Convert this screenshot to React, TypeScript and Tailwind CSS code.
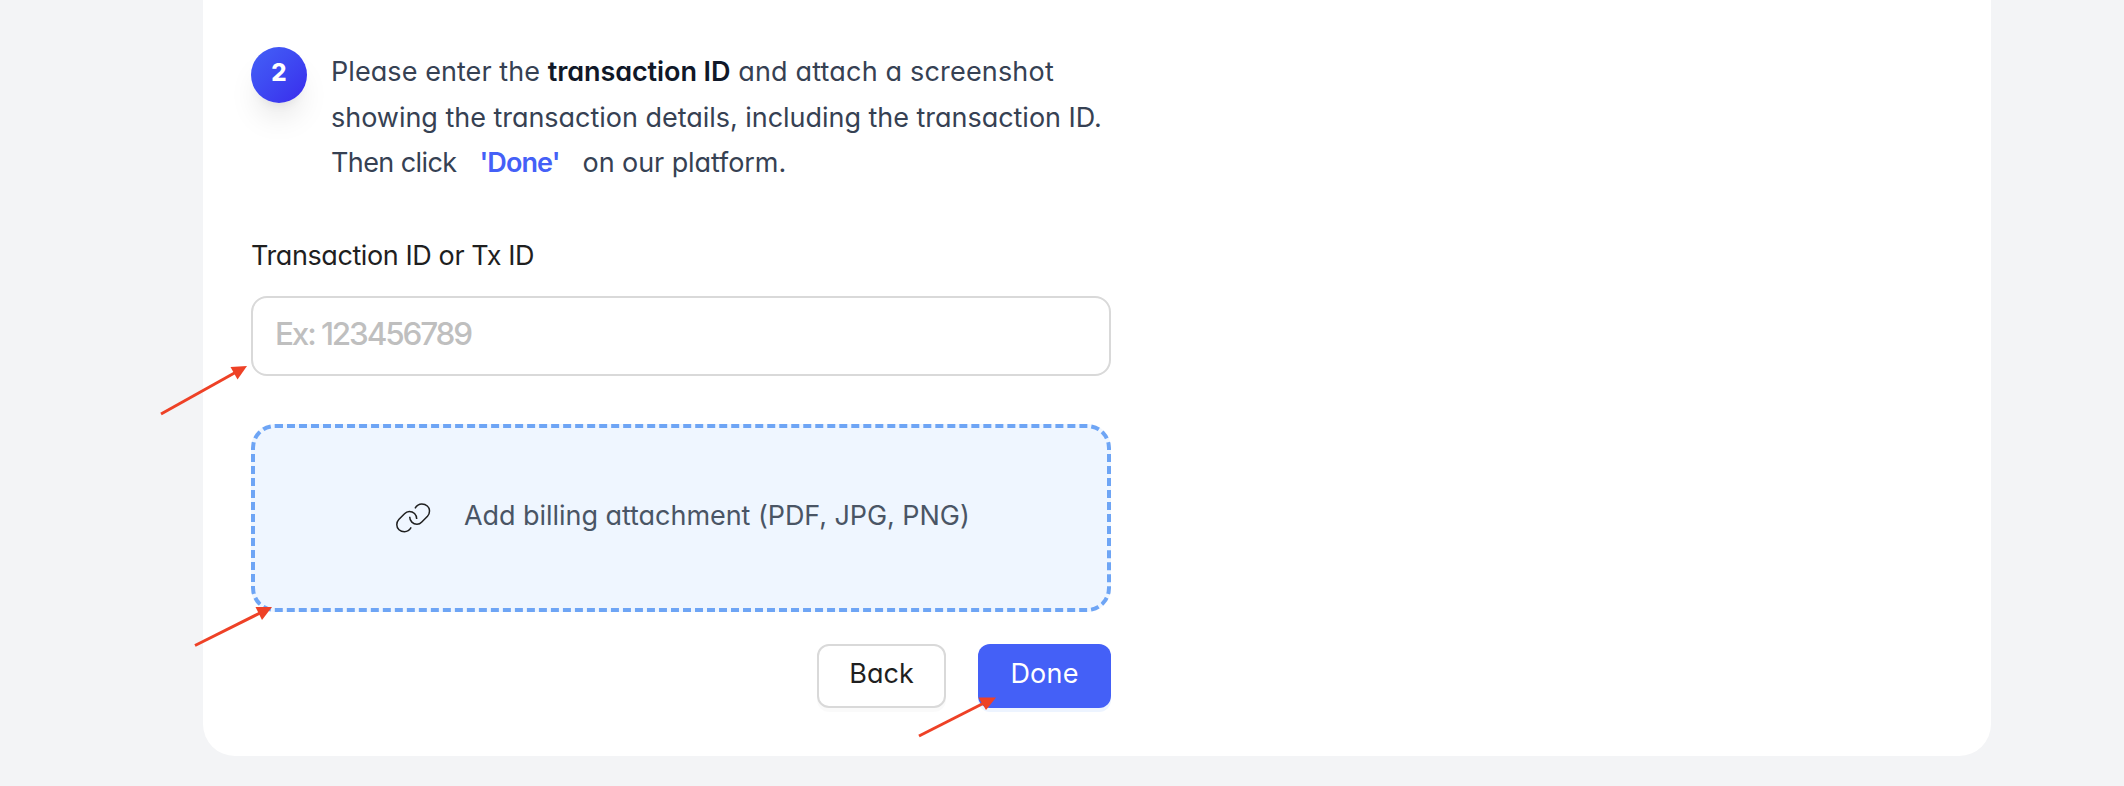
import React from "react";

const ARROWS = [
  { line: "M161 414L238 371", head: "230.5,367 247,366 237.5,379.5" },
  { line: "M195 645.5L262 612", head: "255.5,607 272,607 262,620" },
  { line: "M919 736L986 702", head: "978.5,697.5 996,697.5 986,710" },
];

function LinkIcon() {
  return (
    <svg className="h-[30px] w-[34px] shrink-0 overflow-visible" viewBox="0 0 34 30" fill="none" stroke="#1f1f1f" strokeWidth="1.5">
      <path d="M19 5.3C20.5 2.8 22.7 1 25.8 1C30.2 1 33.5 4 33.5 8C33.5 10.2 32.8 11.8 31.5 13.2L25.8 19C24.5 20.4 23 21.3 21 21.3C17 21.3 13.7 18 13.7 13.7" />
      <path d="M15.2 24.4C13.7 26.9 11.6 28.7 8.5 28.7C4.1 28.7 0.8 25.7 0.8 21.7C0.8 19.5 1.5 17.9 2.8 16.5L8.5 10.7C9.8 9.3 11.3 8.4 13.3 8.4C17.4 8.4 20.7 11.7 20.7 16" />
    </svg>
  );
}

export default function App() {
  return (
    <div className="relative h-[786px] w-[2124px] overflow-hidden bg-[#f3f4f6] pl-[203px] font-['Inter',sans-serif] [font-feature-settings:'cv11']">
      <main className="h-[756px] w-[1788px] rounded-b-[32px] bg-white px-12 pt-[47px]">
        <div className="w-[860px]">
          <div className="flex gap-6">
            <div className="flex h-14 w-14 shrink-0 items-center justify-center rounded-full bg-linear-to-br from-[#4460f7] to-[#3a28ec] pb-1 text-2xl font-extrabold text-white shadow-[0_20px_30px_-6px_rgba(0,0,0,0.1),0_8px_12px_-8px_rgba(0,0,0,0.1)]">
              2
            </div>
            <div className="pt-0.5 text-[27px] leading-[45.5px] whitespace-nowrap text-[#364153]">
              <p><span className="tracking-[0.07px]">Please enter the </span><strong className="font-semibold tracking-[-0.08px] text-[#101828]">transaction ID</strong><span className="tracking-[0.18px]"> and attach a screenshot</span></p>
              <p className="tracking-[-0.03px]">showing the transaction details, including the transaction ID.</p>
              <p><span className="tracking-[-0.6px]">Then click</span><strong className="mx-[23px] font-semibold tracking-[-0.9px] text-[#4460f7]">'Done'</strong><span className="tracking-[-0.08px]">on our platform.</span></p>
            </div>
          </div>
          <label className="mt-12 block text-[27px] leading-[44px] tracking-[-0.41px] text-[#1f1f1f]">Transaction ID or Tx ID</label>
          <div className="mt-[18.5px] flex h-20 items-center rounded-2xl border-2 border-[#d9d9d9] px-[22px] pb-1 text-[31.5px] font-medium tracking-[-2.15px] text-[#bfbfbf]">
            <span>Ex: 123456789</span>
          </div>
          <div className="mt-12 flex h-[188px] items-center rounded-3xl border-4 border-dashed border-[#6ea5f5] bg-[#eff6ff] pl-[141px]">
            <LinkIcon />
            <span className="ml-[34px] pb-1 text-[27px] tracking-[-0.05px] whitespace-nowrap text-[#4a5565]">Add billing attachment (PDF, JPG, PNG)</span>
          </div>
          <div className="mt-8 flex justify-end gap-8 text-[27px]">
            <button className="h-16 w-[129px] rounded-xl border-2 border-[#d9d9d9] bg-white pb-1 text-[#1f1f1f] shadow-[0_4px_0_rgba(0,0,0,0.02)]">Back</button>
            <button className="h-16 w-[133px] rounded-xl bg-[#4460f7] pb-1 tracking-[0.2px] text-white shadow-[0_4px_0_#edf4ff]">Done</button>
          </div>
        </div>
      </main>
      <svg className="pointer-events-none absolute inset-0 h-[786px] w-[2124px]" viewBox="0 0 2124 786">
        {ARROWS.map((a) => (
          <g key={a.line}>
            <path d={a.line} stroke="#ee4126" strokeWidth="3" />
            <polygon points={a.head} fill="#ee4126" />
          </g>
        ))}
      </svg>
    </div>
  );
}
